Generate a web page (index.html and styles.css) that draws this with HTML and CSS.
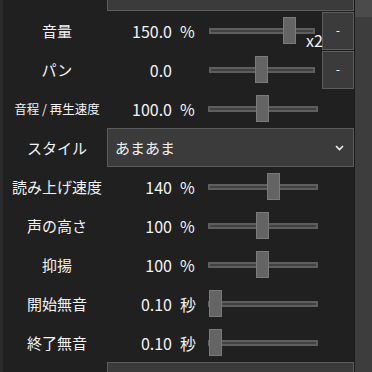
FILE: index.html
```html
<!DOCTYPE html>
<html lang="ja">
<head>
    <meta charset="UTF-8">
    <meta name="viewport" content="width=device-width, initial-scale=1.0">
    <title>ボイス設定</title>
    <link rel="stylesheet" href="styles.css">
</head>
<body>
    <div class="window">
        <div class="edge"></div>

        <div class="panel">
            <div class="box box-top"></div>

            <!-- volume / pan have the reset buttons on the right -->
            <div class="row">
                <div class="label">音量</div>
                <div class="value">150.0</div>
                <div class="unit">%</div>
                <div class="slider short">
                    <div class="track"></div>
                    <div class="thumb" style="left: 74px"></div>
                </div>
                <span class="mult">x2</span>
                <button class="btn">-</button>
            </div>
            <div class="row">
                <div class="label">パン</div>
                <div class="value">0.0</div>
                <div class="unit"></div>
                <div class="slider short">
                    <div class="track"></div>
                    <div class="thumb" style="left: 46px"></div>
                </div>
                <button class="btn">-</button>
            </div>
            <div class="row">
                <div class="label small">音程 / 再生速度</div>
                <div class="value">100.0</div>
                <div class="unit">%</div>
                <div class="slider">
                    <div class="track"></div>
                    <div class="thumb" style="left: 48px"></div>
                </div>
            </div>

            <div class="row">
                <div class="label combo-label">スタイル</div>
                <div class="combo">
                    <span>あまあま</span>
                    <svg class="chevron" width="9" height="6" viewBox="0 0 9 6">
                        <polyline points="1,1 4.5,4.5 8,1" fill="none" stroke="#f0f0f0" stroke-width="1.6"/>
                    </svg>
                </div>
            </div>

            <div class="row">
                <div class="label">読み上げ速度</div>
                <div class="value">140</div>
                <div class="unit">%</div>
                <div class="slider">
                    <div class="track"></div>
                    <div class="thumb" style="left: 59px"></div>
                </div>
            </div>
            <div class="row">
                <div class="label">声の高さ</div>
                <div class="value">100</div>
                <div class="unit">%</div>
                <div class="slider">
                    <div class="track"></div>
                    <div class="thumb" style="left: 48px"></div>
                </div>
            </div>
            <div class="row">
                <div class="label">抑揚</div>
                <div class="value">100</div>
                <div class="unit">%</div>
                <div class="slider">
                    <div class="track"></div>
                    <div class="thumb" style="left: 48px"></div>
                </div>
            </div>
            <div class="row">
                <div class="label">開始無音</div>
                <div class="value">0.10</div>
                <div class="unit">秒</div>
                <div class="slider">
                    <div class="track"></div>
                    <div class="thumb" style="left: 1px"></div>
                </div>
            </div>
            <div class="row">
                <div class="label">終了無音</div>
                <div class="value">0.10</div>
                <div class="unit">秒</div>
                <div class="slider">
                    <div class="track"></div>
                    <div class="thumb" style="left: 1px"></div>
                </div>
            </div>

            <div class="box box-bottom"></div>
        </div>

        <div class="scrollbar">
            <div class="scroll-thumb"></div>
        </div>
    </div>
</body>
</html>
```

FILE: styles.css
```css
body {
    margin: 0;
    background-color: #202020;
    font-family: "Noto Sans CJK JP", "Noto Sans", sans-serif;
    color: #f2f2f2;
}
.window {
    display: flex;
    width: 372px;
    height: 372px;
    overflow: hidden;
}
.edge {
    width: 3px;
    background-color: #2b2b2b;
}
.panel {
    width: 352px;
    display: flex;
    flex-direction: column;
}
.box {
    box-sizing: border-box;
    margin-left: 104px;
    width: 247px;
    background-color: #3b3b3b;
    border: 1px solid #5c5c5c;
    flex-shrink: 0;
}
.box-top {
    height: 12px;
    margin-top: -1px;
}
.box-bottom {
    height: 20px;
}
.row {
    position: relative;
    display: flex;
    align-items: center;
    height: 39px;
    flex-shrink: 0;
}
.label {
    width: 108px;
    text-align: center;
    font-size: 15px;
    white-space: nowrap;
}
.label.small {
    font-size: 12.5px;
}
.value {
    width: 61px;
    text-align: right;
    font-size: 16px;
}
.unit {
    box-sizing: border-box;
    width: 36px;
    padding-left: 8px;
    font-size: 16px;
}
.slider {
    position: relative;
    display: flex;
    align-items: center;
    width: 110px;
    height: 27px;
}
.slider.short {
    margin-left: 1px;
    width: 106px;
}
.track {
    box-sizing: border-box;
    width: 100%;
    height: 6px;
    background-color: #414141;
    border: 2px solid #5e5e5e;
}
.thumb {
    position: absolute;
    top: 0;
    box-sizing: border-box;
    width: 13px;
    height: 27px;
    background-color: #646464;
    border: 1px solid #7a7a7a;
}
.mult {
    position: absolute;
    left: 303px;
    bottom: 2px;
    font-size: 16px;
    line-height: 16px;
}
.btn {
    box-sizing: border-box;
    margin-left: 7px;
    width: 32px;
    height: 38px;
    padding: 0;
    background-color: #3b3b3b;
    border: 1px solid #5c5c5c;
    color: #f2f2f2;
    font-family: "Noto Sans", sans-serif;
    font-size: 12px;
}
.combo-label {
    box-sizing: border-box;
    width: 104px;
    padding-left: 4px;
}
.combo {
    box-sizing: border-box;
    display: flex;
    align-items: center;
    justify-content: space-between;
    width: 247px;
    height: 39px;
    padding: 0 9px 0 7px;
    background-color: #3b3b3b;
    border: 1px solid #5c5c5c;
    font-size: 15px;
}
.scrollbar {
    width: 17px;
    background-color: #3d3d3d;
    border-left: 1px solid #1a1a1a;
}
.scroll-thumb {
    height: 17px;
    background-color: #4b4b4b;
}
```
